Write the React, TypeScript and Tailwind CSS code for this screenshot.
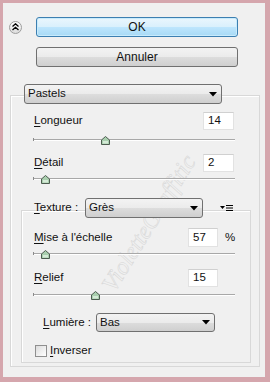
import React from 'react';

// Windows 7 style gradient shared by push buttons and combo boxes
const grayFace = 'bg-[linear-gradient(#f3f3f3,#ebebeb_50%,#dddddd_50%,#cfcfcf)] border border-[#707070] rounded-[3px]';

function Arrow() {
    return (
        <svg width="8" height="5" viewBox="0 0 8 5">
            <path d="M0 0H8L4 4.5Z" fill="#000" />
        </svg>
    );
}

function Combo({ value, className }: { value: string; className: string }) {
    return (
        <div className={`${grayFace} ${className} flex items-center justify-between pl-[3px] pr-[4px] relative z-10`}>
            <span>{value}</span>
            <Arrow />
        </div>
    );
}

function Field({ value, className }: { value: string; className: string }) {
    return (
        <div className={`${className} bg-white border border-[#e2e2e2] border-t-[#d0d0d0] flex items-center pl-[4px]`}>
            {value}
        </div>
    );
}

// Photoshop-ish slider: etched track with a small green house-shaped thumb
function Slider({ pos, className = '' }: { pos: number; className?: string }) {
    return (
        <div className={`relative h-[10px] w-[202px] ml-[-1px] ${className}`}>
            <div className="absolute left-0 right-0 top-[4px] h-px bg-[#a8a8a8]" />
            <div className="absolute left-0 right-0 top-[5px] h-px bg-white" />
            <div className="absolute left-0 top-[3px] h-[3px] w-px bg-[#8a8a8a]" />
            <svg className="absolute top-[1px]" style={{ left: pos - 4 }} width="9" height="9" viewBox="0 0 9 9">
                <path d="M4.5 0.5L8.5 4V8.5H0.5V4Z" fill="#a9cfae" stroke="#4d5c50" strokeWidth="1" />
                <path d="M2 5H7V7.5H2Z" fill="#d5ead7" />
            </svg>
        </div>
    );
}

function U({ children }: { children: React.ReactNode }) {
    return <span className="underline underline-offset-2">{children}</span>;
}

export default function App() {
    return (
        <div className="w-[270px] h-[382px] bg-[#d5a6ad] pt-[3px] pl-[3px] pr-[5px] pb-[5px] text-[11.5px] text-[#111] font-['Liberation_Sans',Arial,sans-serif] leading-none">
            <div className="relative h-full bg-[#f0f0f0] overflow-hidden pt-[14px]">
                {/* watermark, drawn first so the panel text sits on top */}
                <div className="absolute left-[68px] top-[208px] rotate-[-58deg] font-['Liberation_Serif',serif] italic text-[24px] text-transparent [-webkit-text-stroke:0.5px_#d6d6d6] pointer-events-none whitespace-nowrap">
                    VioletteGraffitic
                </div>

                {/* top buttons */}
                <div className="flex items-center">
                    <div className="ml-[6px] w-[13px] h-[13px] rounded-full border border-[#9d9d9d] bg-linear-to-b from-white to-[#dcdcdc] flex items-center justify-center">
                        <svg width="7" height="8" viewBox="0 0 7 8">
                            <path d="M0.5 3.5L3.5 0.8L6.5 3.5M0.5 7L3.5 4.3L6.5 7" fill="none" stroke="#000" strokeWidth="1.3" />
                        </svg>
                    </div>
                    <div className="ml-[14px] w-[202px] h-[20px] rounded-[3px] border border-[#3c7fb1] bg-[linear-gradient(#eaf6fd,#d9f0fc_50%,#bee6fd_50%,#a7d9f5)] shadow-[inset_0_0_0_1px_#c8ebfc] flex items-center justify-center text-[12px]">
                        OK
                    </div>
                </div>
                <div className={`${grayFace} ml-[33px] mt-[10px] w-[202px] h-[20px] flex items-center justify-center text-[12px]`}>
                    Annuler
                </div>

                <Combo value="Pastels" className="ml-[21px] mt-[17px] w-[198px] h-[20px]" />

                {/* main group */}
                <div className="ml-[7px] mt-[-9px] w-[250px] h-[272px] border border-[#d8d8d8] shadow-[inset_1px_1px_0_#fff] pl-[23px] pt-[16px]">
                    <div className="flex items-center justify-between w-[200px] h-[18px]">
                        <span><U>L</U>ongueur</span>
                        <Field value="14" className="w-[31px] h-[18px]" />
                    </div>
                    <Slider pos={72} className="mt-[5px]" />

                    <div className="flex items-center justify-between w-[200px] h-[18px] mt-[9px]">
                        <span><U>D</U>étail</span>
                        <Field value="2" className="w-[31px] h-[18px]" />
                    </div>
                    <Slider pos={12} className="mt-[2px]" />

                    <div className="flex items-center mt-[14px] h-[20px]">
                        <span className="w-[51px]"><U>T</U>exture :</span>
                        <Combo value="Grès" className="w-[118px] h-[20px]" />
                        <svg className="ml-[17px] relative z-10" width="14" height="8" viewBox="0 0 14 8">
                            <path d="M0 2H5L2.5 5Z" fill="#000" />
                            <path d="M6 1.5H13M6 4H13M6 6.5H13" stroke="#000" strokeWidth="1" />
                        </svg>
                    </div>

                    {/* texture group */}
                    <div className="ml-[-13px] mt-[-8px] w-[230px] h-[153px] border border-[#d8d8d8] shadow-[inset_1px_1px_0_#fff] pl-[12px] pt-[17px]">
                        <div className="flex items-center h-[19px] w-[200px]">
                            <span className="flex-1"><U>M</U>ise à l'échelle</span>
                            <Field value="57" className="w-[30px] h-[19px]" />
                            <span className="ml-[7px] w-[9px]">%</span>
                        </div>
                        <Slider pos={12} className="mt-[2px]" />

                        <div className="flex items-center h-[18px] w-[200px] mt-[10px]">
                            <span className="flex-1"><U>R</U>elief</span>
                            <Field value="15" className="w-[30px] h-[18px]" />
                            <span className="ml-[7px] w-[9px]" />
                        </div>
                        <Slider pos={62} className="mt-[3px]" />

                        <div className="flex items-center mt-[13px] h-[19px] pl-[9px]">
                            <span className="w-[53px]"><U>L</U>umière :</span>
                            <Combo value="Bas" className="w-[119px] h-[19px]" />
                        </div>

                        <div className="flex items-center mt-[13px] h-[12px] ml-[1px]">
                            <div className="w-[12px] h-[12px] border border-[#8f8f8f] bg-linear-to-br from-[#dcdcdc] to-white" />
                            <span className="ml-[3px]"><U>I</U>nverser</span>
                        </div>
                    </div>
                </div>
            </div>
        </div>
    );
}
